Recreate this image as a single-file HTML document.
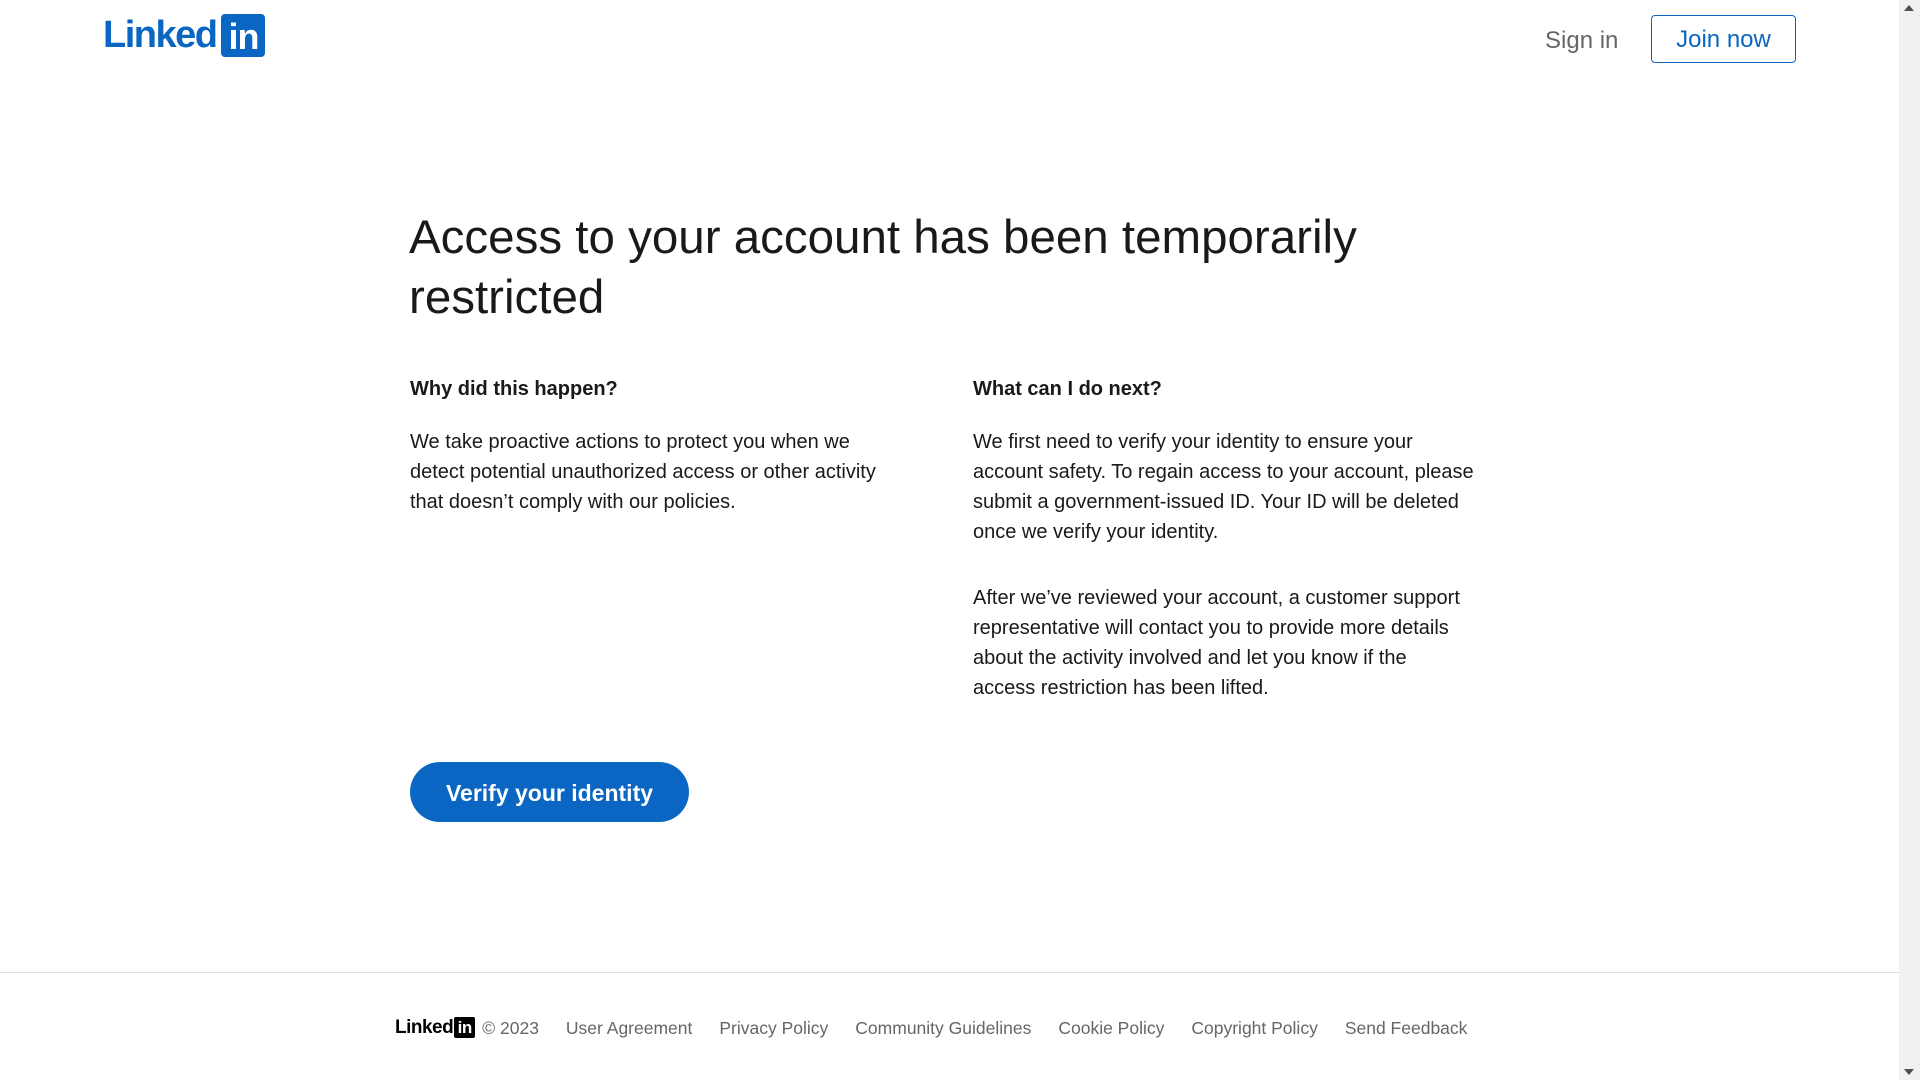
<!DOCTYPE html>
<html><head><meta charset="utf-8"><style>
*{margin:0;padding:0;box-sizing:border-box}
html,body{width:1920px;height:1080px;overflow:hidden;background:#fff;font-family:"Liberation Sans",sans-serif;color:#000000e6}
.sb{position:absolute;right:0;top:0;width:21px;height:1080px;background:#f1f1f1}
.sb i{position:absolute;left:5px;width:0;height:0;border-left:5px solid transparent;border-right:5px solid transparent}
.logo{position:absolute;left:103px;top:15px;height:41px;display:flex;align-items:center}
.logo b{font-size:38px;color:#0a66c2;letter-spacing:-1.5px;font-weight:bold}
.logo span{display:inline-block;background:#0a66c2;color:#fff;font-weight:bold;font-size:36px;width:44px;height:43px;border-radius:4px;text-align:center;line-height:46px;margin-left:5px;letter-spacing:-1px}
.signin{position:absolute;left:1545px;top:27px;font-size:24px;color:#666}
.join{position:absolute;left:1651px;top:15px;width:145px;height:48px;border:1.5px solid #0a66c2;border-radius:4px;color:#0a66c2;font-size:24px;text-align:center;line-height:48px}
h1{position:absolute;left:409px;top:208px;font-size:47.5px;font-weight:normal;line-height:60px;color:#000000e6}
h2{position:absolute;top:378px;font-size:20px;font-weight:bold}
p{position:absolute;font-size:20px;line-height:30px;white-space:nowrap;color:#000000e6}
.btn{position:absolute;left:410px;top:762px;width:279px;height:60px;border-radius:30px;background:#0a66c2;color:#fff;font-weight:bold;font-size:23px;text-align:center;line-height:62px}
.hr{position:absolute;left:0;top:972px;width:1899px;height:1px;background:#e0e0e0}
.foot{position:absolute;left:395px;top:1017px;display:flex;align-items:center;font-size:17.5px;color:#666;white-space:nowrap}
.foot .l{font-weight:bold;color:#000;font-size:19px;letter-spacing:-.5px}
.foot .l span{display:inline-block;background:#000;color:#fff;width:21px;height:21px;line-height:22px;text-align:center;font-size:17px;border-radius:2px;margin-left:1px}
.foot a{margin-left:27px}
</style></head><body>
<div class="logo"><b>Linked</b><span>in</span></div>
<div class="signin">Sign in</div>
<div class="join">Join now</div>
<h1>Access to your account has been temporarily<br>restricted</h1>
<h2 style="left:410px">Why did this happen?</h2>
<h2 style="left:973px">What can I do next?</h2>
<p style="left:410px;top:427px">We take proactive actions to protect you when we<br>detect potential unauthorized access or other activity<br>that doesn’t comply with our policies.</p>
<p style="left:973px;top:427px">We first need to verify your identity to ensure your<br>account safety. To regain access to your account, please<br>submit a government-issued ID. Your ID will be deleted<br>once we verify your identity.</p>
<p style="left:973px;top:583px">After we’ve reviewed your account, a customer support<br>representative will contact you to provide more details<br>about the activity involved and let you know if the<br>access restriction has been lifted.</p>
<div class="btn">Verify your identity</div>
<div class="hr"></div>
<div class="foot"><div class="l">Linked<span>in</span></div><span style="margin-left:7px">© 2023</span><a>User Agreement</a><a>Privacy Policy</a><a>Community Guidelines</a><a>Cookie Policy</a><a>Copyright Policy</a><a>Send Feedback</a></div>
<div class="sb"><i style="top:5px;border-bottom:6px solid #505050"></i><i style="bottom:5px;border-top:6px solid #505050"></i></div>
</body></html>
